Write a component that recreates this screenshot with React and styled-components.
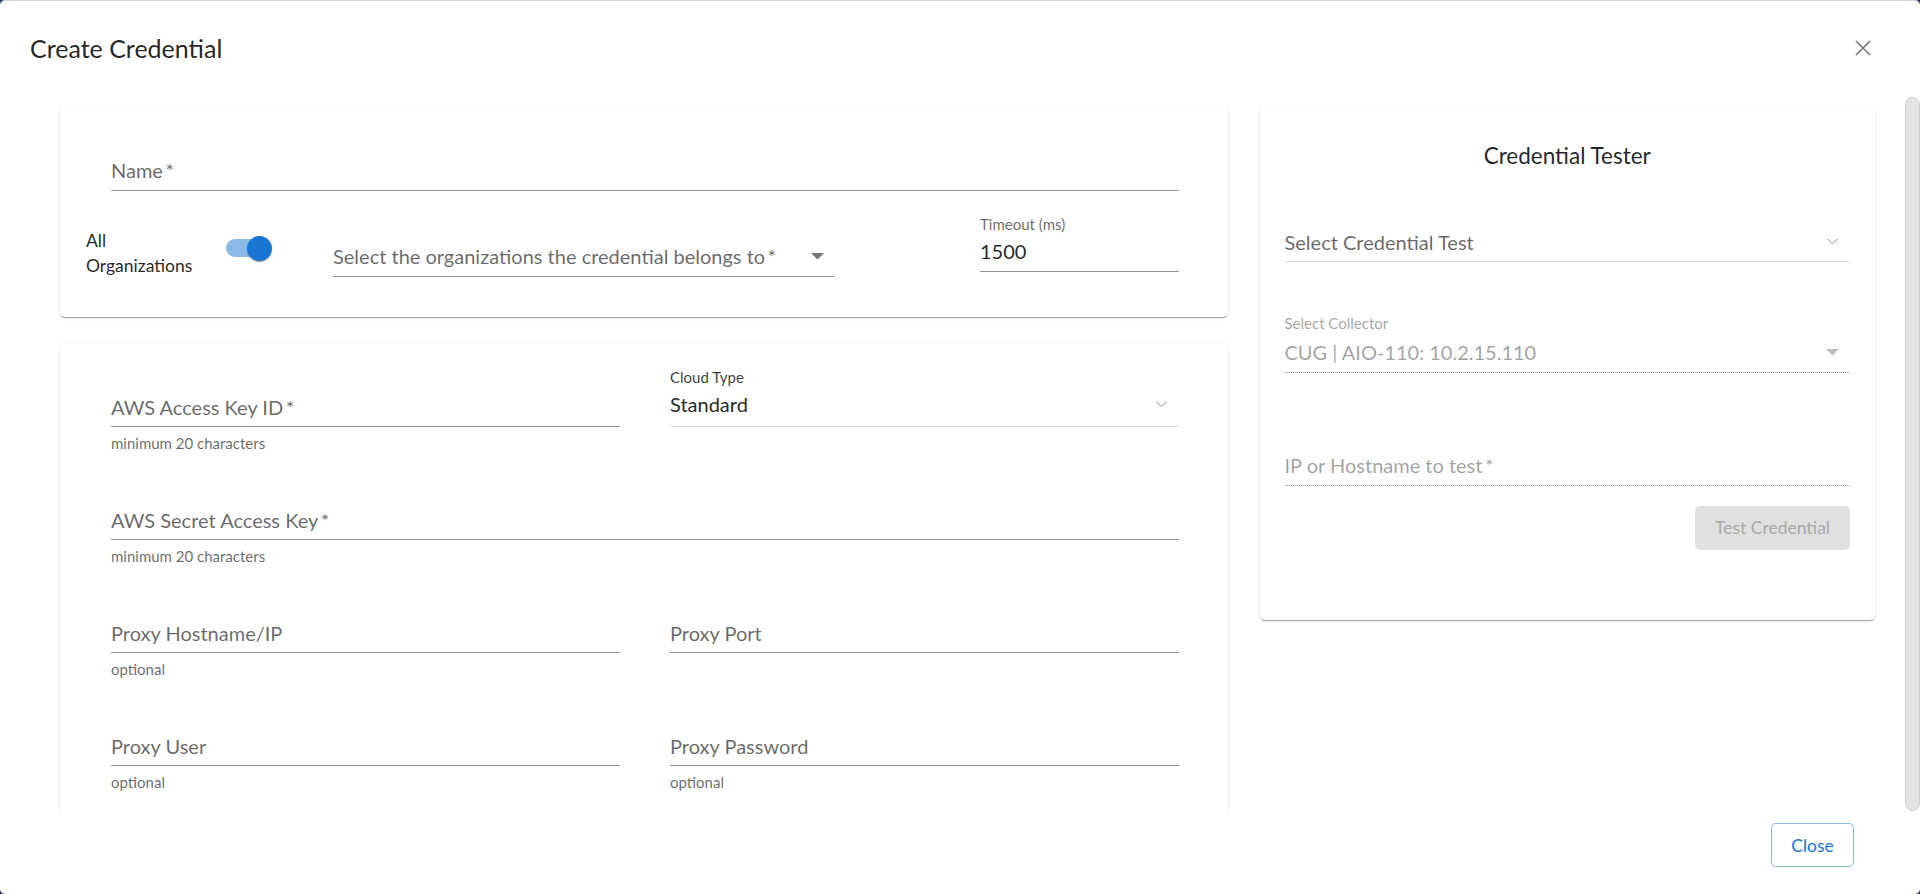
import React from 'react';
import styled, { createGlobalStyle } from 'styled-components';

const GlobalStyle = createGlobalStyle`
  html, body { margin: 0; padding: 0; height: 100%; }
  body {
    background: #1d3461;
    font-family: Lato, "Noto Sans", "Liberation Sans", sans-serif;
    overflow: hidden;
  }
  #root { height: 100%; }
  *, *::before, *::after { box-sizing: border-box; }
`;

const Dialog = styled.div`
  height: 100vh;
  width: 100vw;
  background: #fff;
  border-radius: 5px;
  border-top: 1px solid #cfd2d8;
  display: flex;
  flex-direction: column;
  overflow: hidden;
`;

const Header = styled.header`
  height: 94px;
  flex: none;
  display: flex;
  align-items: center;
  justify-content: space-between;
  padding: 0 37px 0 30px;
`;

const Title = styled.h2`
  margin: 0;
  font-size: 25px;
  font-weight: 400;
  line-height: 32px;
  color: rgba(0, 0, 0, 0.87);
`;

const IconButton = styled.button`
  width: 40px;
  height: 40px;
  border: none;
  background: transparent;
  padding: 0;
  display: flex;
  align-items: center;
  justify-content: center;
  cursor: pointer;
`;

const BodyRow = styled.div`
  flex: 1;
  min-height: 0;
  display: flex;
`;

const Body = styled.div`
  flex: 1;
  min-width: 0;
  overflow: hidden;
  padding: 11.5px 29px 3px 60px;
`;

const ScrollRail = styled.div`
  flex: none;
  width: 16px;
  display: flex;
  padding: 2px 0 1px 1px;
`;

const ScrollThumb = styled.div`
  flex: 1;
  background: #e3e3e3;
  border: 1px solid #cdcdcd;
  border-radius: 8px;
`;

const Columns = styled.div`
  display: grid;
  grid-template-columns: 1168px 615px;
  column-gap: 32px;
  align-items: start;
`;

const Column = styled.div`
  display: flex;
  flex-direction: column;
  gap: 27px;
`;

const Card = styled.section`
  background: #fff;
  border-radius: 5px;
  box-shadow: 0px 2px 1px -1px rgba(0, 0, 0, 0.2), 0px 1px 1px 0px rgba(0, 0, 0, 0.14),
    0px 1px 3px 0px rgba(0, 0, 0, 0.12);
  padding: ${(p) => p.$pad};
  display: flex;
  flex-direction: column;
`;

const Row = styled.div`
  display: flex;
  align-items: flex-start;
  margin-top: ${(p) => p.$mt || 0}px;
`;

const FieldGrid = styled.div`
  display: grid;
  grid-template-columns: 509px 509px;
  column-gap: 50px;
  row-gap: 24.25px;
`;

const Field = styled.div`
  display: flex;
  flex-direction: column;
  width: ${(p) => (p.$w ? `${p.$w}px` : 'auto')};
  margin-left: ${(p) => p.$ml || '0'};
  margin-top: ${(p) => p.$mt || 0}px;
  grid-column: ${(p) => (p.$span ? '1 / -1' : 'auto')};
  flex: ${(p) => (p.$w ? 'none' : '1')};
`;

const FieldLabel = styled.label`
  display: block;
  height: 20px;
  padding-top: ${(p) => p.$pt || 0}px;
  font-size: 15px;
  line-height: 20px;
  color: ${(p) => p.$color || 'rgba(0,0,0,0.6)'};
  white-space: nowrap;
`;

const InputBox = styled.div`
  height: 40px;
  display: flex;
  align-items: center;
  gap: 8px;
  padding-right: ${(p) => p.$pr || 0}px;
  padding-bottom: ${(p) => p.$pb || 0}px;
  border-bottom: 1px ${(p) => (p.$dotted ? 'dotted' : 'solid')} ${(p) => p.$line || 'rgba(0,0,0,0.42)'};
  font-size: 20px;
  color: ${(p) => p.$color || 'rgba(0,0,0,0.6)'};
`;

const InputText = styled.span`
  flex: 1;
  white-space: nowrap;
  overflow: hidden;
`;

const Helper = styled.div`
  margin-top: 3.75px;
  font-size: 15px;
  line-height: 25px;
  color: rgba(0, 0, 0, 0.6);
`;

const ToggleLabel = styled.div`
  width: 112px;
  margin-top: 16.5px;
  font-size: 17.5px;
  line-height: 25px;
  color: rgba(0, 0, 0, 0.87);
`;

const Switch = styled.span`
  position: relative;
  flex: none;
  width: 46px;
  height: 25px;
  margin-left: 28px;
  margin-top: 24px;
`;

const SwitchTrack = styled.span`
  position: absolute;
  left: 0;
  top: 3.75px;
  width: 42.5px;
  height: 17.5px;
  border-radius: 9px;
  background: #8cbae8;
`;

const SwitchThumb = styled.span`
  position: absolute;
  right: 0;
  top: 0;
  width: 25px;
  height: 25px;
  border-radius: 50%;
  background: #1976d2;
  box-shadow: 0px 2px 1px -1px rgba(0, 0, 0, 0.2), 0px 1px 1px 0px rgba(0, 0, 0, 0.14),
    0px 1px 3px 0px rgba(0, 0, 0, 0.12);
`;

const TesterTitle = styled.h3`
  margin: 0;
  text-align: center;
  font-size: 22.5px;
  line-height: 27px;
  font-weight: 400;
  color: rgba(0, 0, 0, 0.87);
`;

const TestButton = styled.button`
  align-self: flex-end;
  margin-top: 20px;
  width: 155px;
  height: 44px;
  border: none;
  border-radius: 5px;
  background: #e0e0e0;
  color: #a9a9a9;
  font-family: inherit;
  font-size: 17.5px;
`;

const Footer = styled.footer`
  height: 82px;
  flex: none;
  display: flex;
  justify-content: flex-end;
  align-items: flex-start;
  padding: 11px 66px 0 0;
`;

const OutlineButton = styled.button`
  width: 83px;
  height: 44px;
  border: 1px solid rgba(25, 118, 210, 0.5);
  border-radius: 5px;
  background: #fff;
  color: #1976d2;
  font-family: inherit;
  font-size: 17.5px;
  cursor: pointer;
`;

const CloseIcon = () => (
  <svg width="16" height="16" viewBox="0 0 16 16">
    <path d="M1 1 L15 15 M15 1 L1 15" stroke="#767676" strokeWidth="1.6" fill="none" />
  </svg>
);

const Caret = ({ color }) => (
  <svg width="13" height="7" viewBox="0 0 13 7">
    <polygon points="0,0 13,0 6.5,6.5" fill={color} />
  </svg>
);

const Chevron = () => (
  <svg width="11" height="7" viewBox="0 0 11 7">
    <polyline points="0.5,0.8 5.5,5.8 10.5,0.8" stroke="#8a8a8a" strokeWidth="1" fill="none" />
  </svg>
);

const TextField = ({ label, helper, span, w, ml, mt }) => (
  <Field $span={span} $w={w} $ml={ml} $mt={mt}>
    <FieldLabel />
    <InputBox>
      <InputText>{label}</InputText>
    </InputBox>
    {helper && <Helper>{helper}</Helper>}
  </Field>
);

export default function App() {
  return (
    <>
      <GlobalStyle />
      <Dialog>
        <Header>
          <Title>Create Credential</Title>
          <IconButton aria-label="close">
            <CloseIcon />
          </IconButton>
        </Header>
        <BodyRow>
          <Body>
            <Columns>
              <Column>
                <Card $pad="24px 49px 39px 26px">
                  <Field $ml="25px">
                    <FieldLabel />
                    <InputBox>
                      <InputText>Name&thinsp;*</InputText>
                    </InputBox>
                  </Field>
                  <Row $mt={21}>
                    <ToggleLabel>All Organizations</ToggleLabel>
                    <Switch>
                      <SwitchTrack />
                      <SwitchThumb />
                    </Switch>
                    <Field $w={501} $ml="61px" $mt={5}>
                      <FieldLabel />
                      <InputBox $pr={10}>
                        <InputText>Select the organizations the credential belongs to&thinsp;*</InputText>
                        <Caret color="#757575" />
                      </InputBox>
                    </Field>
                    <Field $w={199} $ml="auto">
                      <FieldLabel $pt={2.5}>Timeout (ms)</FieldLabel>
                      <InputBox $color="rgba(0,0,0,0.87)">
                        <InputText>1500</InputText>
                      </InputBox>
                    </Field>
                  </Row>
                </Card>

                <Card $pad="23px 49px 22px 51px">
                  <FieldGrid>
                    <TextField label={<>AWS Access Key ID&thinsp;*</>} helper="minimum 20 characters" />
                    <Field>
                      <FieldLabel $color="rgba(0,0,0,0.78)">Cloud Type</FieldLabel>
                      <InputBox $line="#dedede" $color="rgba(0,0,0,0.87)" $pr={12} $pb={5}>
                        <InputText>Standard</InputText>
                        <Chevron />
                      </InputBox>
                    </Field>
                    <TextField span label={<>AWS Secret Access Key&thinsp;*</>} helper="minimum 20 characters" />
                    <TextField label="Proxy Hostname/IP" helper="optional" />
                    <TextField label="Proxy Port" />
                    <TextField label="Proxy User" helper="optional" />
                    <TextField label="Proxy Password" helper="optional" />
                  </FieldGrid>
                </Card>
              </Column>

              <Card $pad="35.5px 25px 70px 24.5px">
                <TesterTitle>Credential Tester</TesterTitle>
                <Field $mt={33}>
                  <FieldLabel />
                  <InputBox $line="#e0e0e0" $pr={12}>
                    <InputText>Select Credential Test</InputText>
                    <Chevron />
                  </InputBox>
                </Field>
                <Field $mt={50.5}>
                  <FieldLabel $color="rgba(0,0,0,0.38)">Select Collector</FieldLabel>
                  <InputBox $dotted $color="rgba(0,0,0,0.38)" $pr={11}>
                    <InputText>CUG | AIO-110: 10.2.15.110</InputText>
                    <Caret color="#bdbdbd" />
                  </InputBox>
                </Field>
                <Field $mt={53.3}>
                  <FieldLabel />
                  <InputBox $dotted $color="rgba(0,0,0,0.38)">
                    <InputText>IP or Hostname to test&thinsp;*</InputText>
                  </InputBox>
                </Field>
                <TestButton disabled>Test Credential</TestButton>
              </Card>
            </Columns>
          </Body>
          <ScrollRail>
            <ScrollThumb />
          </ScrollRail>
        </BodyRow>
        <Footer>
          <OutlineButton>Close</OutlineButton>
        </Footer>
      </Dialog>
    </>
  );
}
